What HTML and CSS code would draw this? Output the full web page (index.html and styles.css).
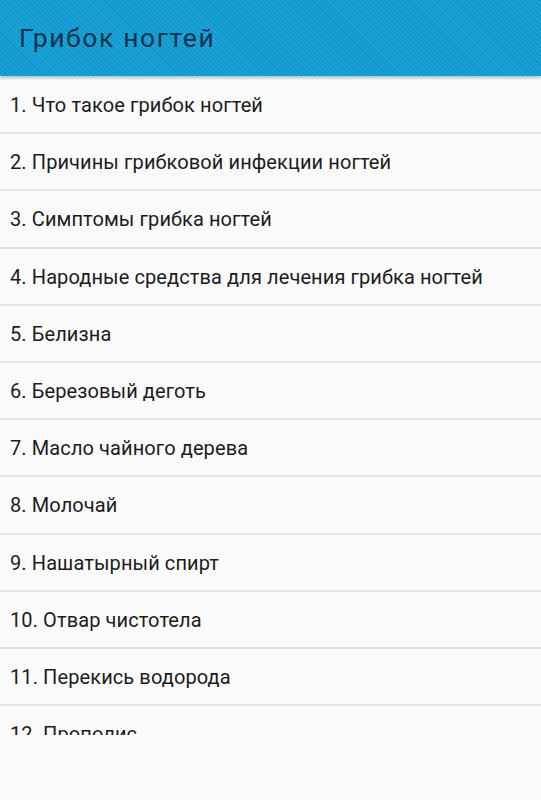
FILE: index.html
```html
<!DOCTYPE html>
<html lang="ru">
<head>
<meta charset="utf-8">
<link rel="stylesheet" href="styles.css">
</head>
<body>
<header class="bar"><h1 class="title">Грибок ногтей</h1></header>
<ul class="list">
  <li class="item">1. Что такое грибок ногтей</li>
  <li class="item">2. Причины грибковой инфекции ногтей</li>
  <li class="item">3. Симптомы грибка ногтей</li>
  <li class="item">4. Народные средства для лечения грибка ногтей</li>
  <li class="item">5. Белизна</li>
  <li class="item">6. Березовый деготь</li>
  <li class="item">7. Масло чайного дерева</li>
  <li class="item">8. Молочай</li>
  <li class="item">9. Нашатырный спирт</li>
  <li class="item">10. Отвар чистотела</li>
  <li class="item">11. Перекись водорода</li>
  <li class="item">12. Прополис</li>
</ul>
</body>
</html>
```
FILE: styles.css
```css
html, body {
  margin: 0;
  padding: 0;
  background: #fafafa;
  font-family: Roboto, "Noto Sans", sans-serif;
}
.bar {
  position: relative;
  z-index: 1;
  height: 76px;
  display: flex;
  align-items: center;
  padding-left: 19px;
  background: repeating-linear-gradient(45deg, #1ba6d9 0px, #1ba6d9 1.6px, #1495c8 1.6px, #1495c8 3.2px);
  box-shadow: 0 2px 3px rgba(0,0,0,0.25);
}
.title {
  margin: 0;
  padding-bottom: 1px;
  font-size: 26.5px;
  letter-spacing: 1.6px;
  font-weight: 400;
  color: #0f3450;
}
.list {
  list-style: none;
  margin: 1px 0 0 0;
  padding: 0;
  height: 658px;
  overflow: hidden;
}
.item {
  display: flex;
  align-items: center;
  padding-left: 10px;
  padding-top: 1px;
  box-sizing: border-box;
  height: 57.2px;
  font-size: 20px;
  letter-spacing: 0.1px;
  color: #1c1c1c;
  border-bottom: 2px solid #e3e3e3;
}
```
